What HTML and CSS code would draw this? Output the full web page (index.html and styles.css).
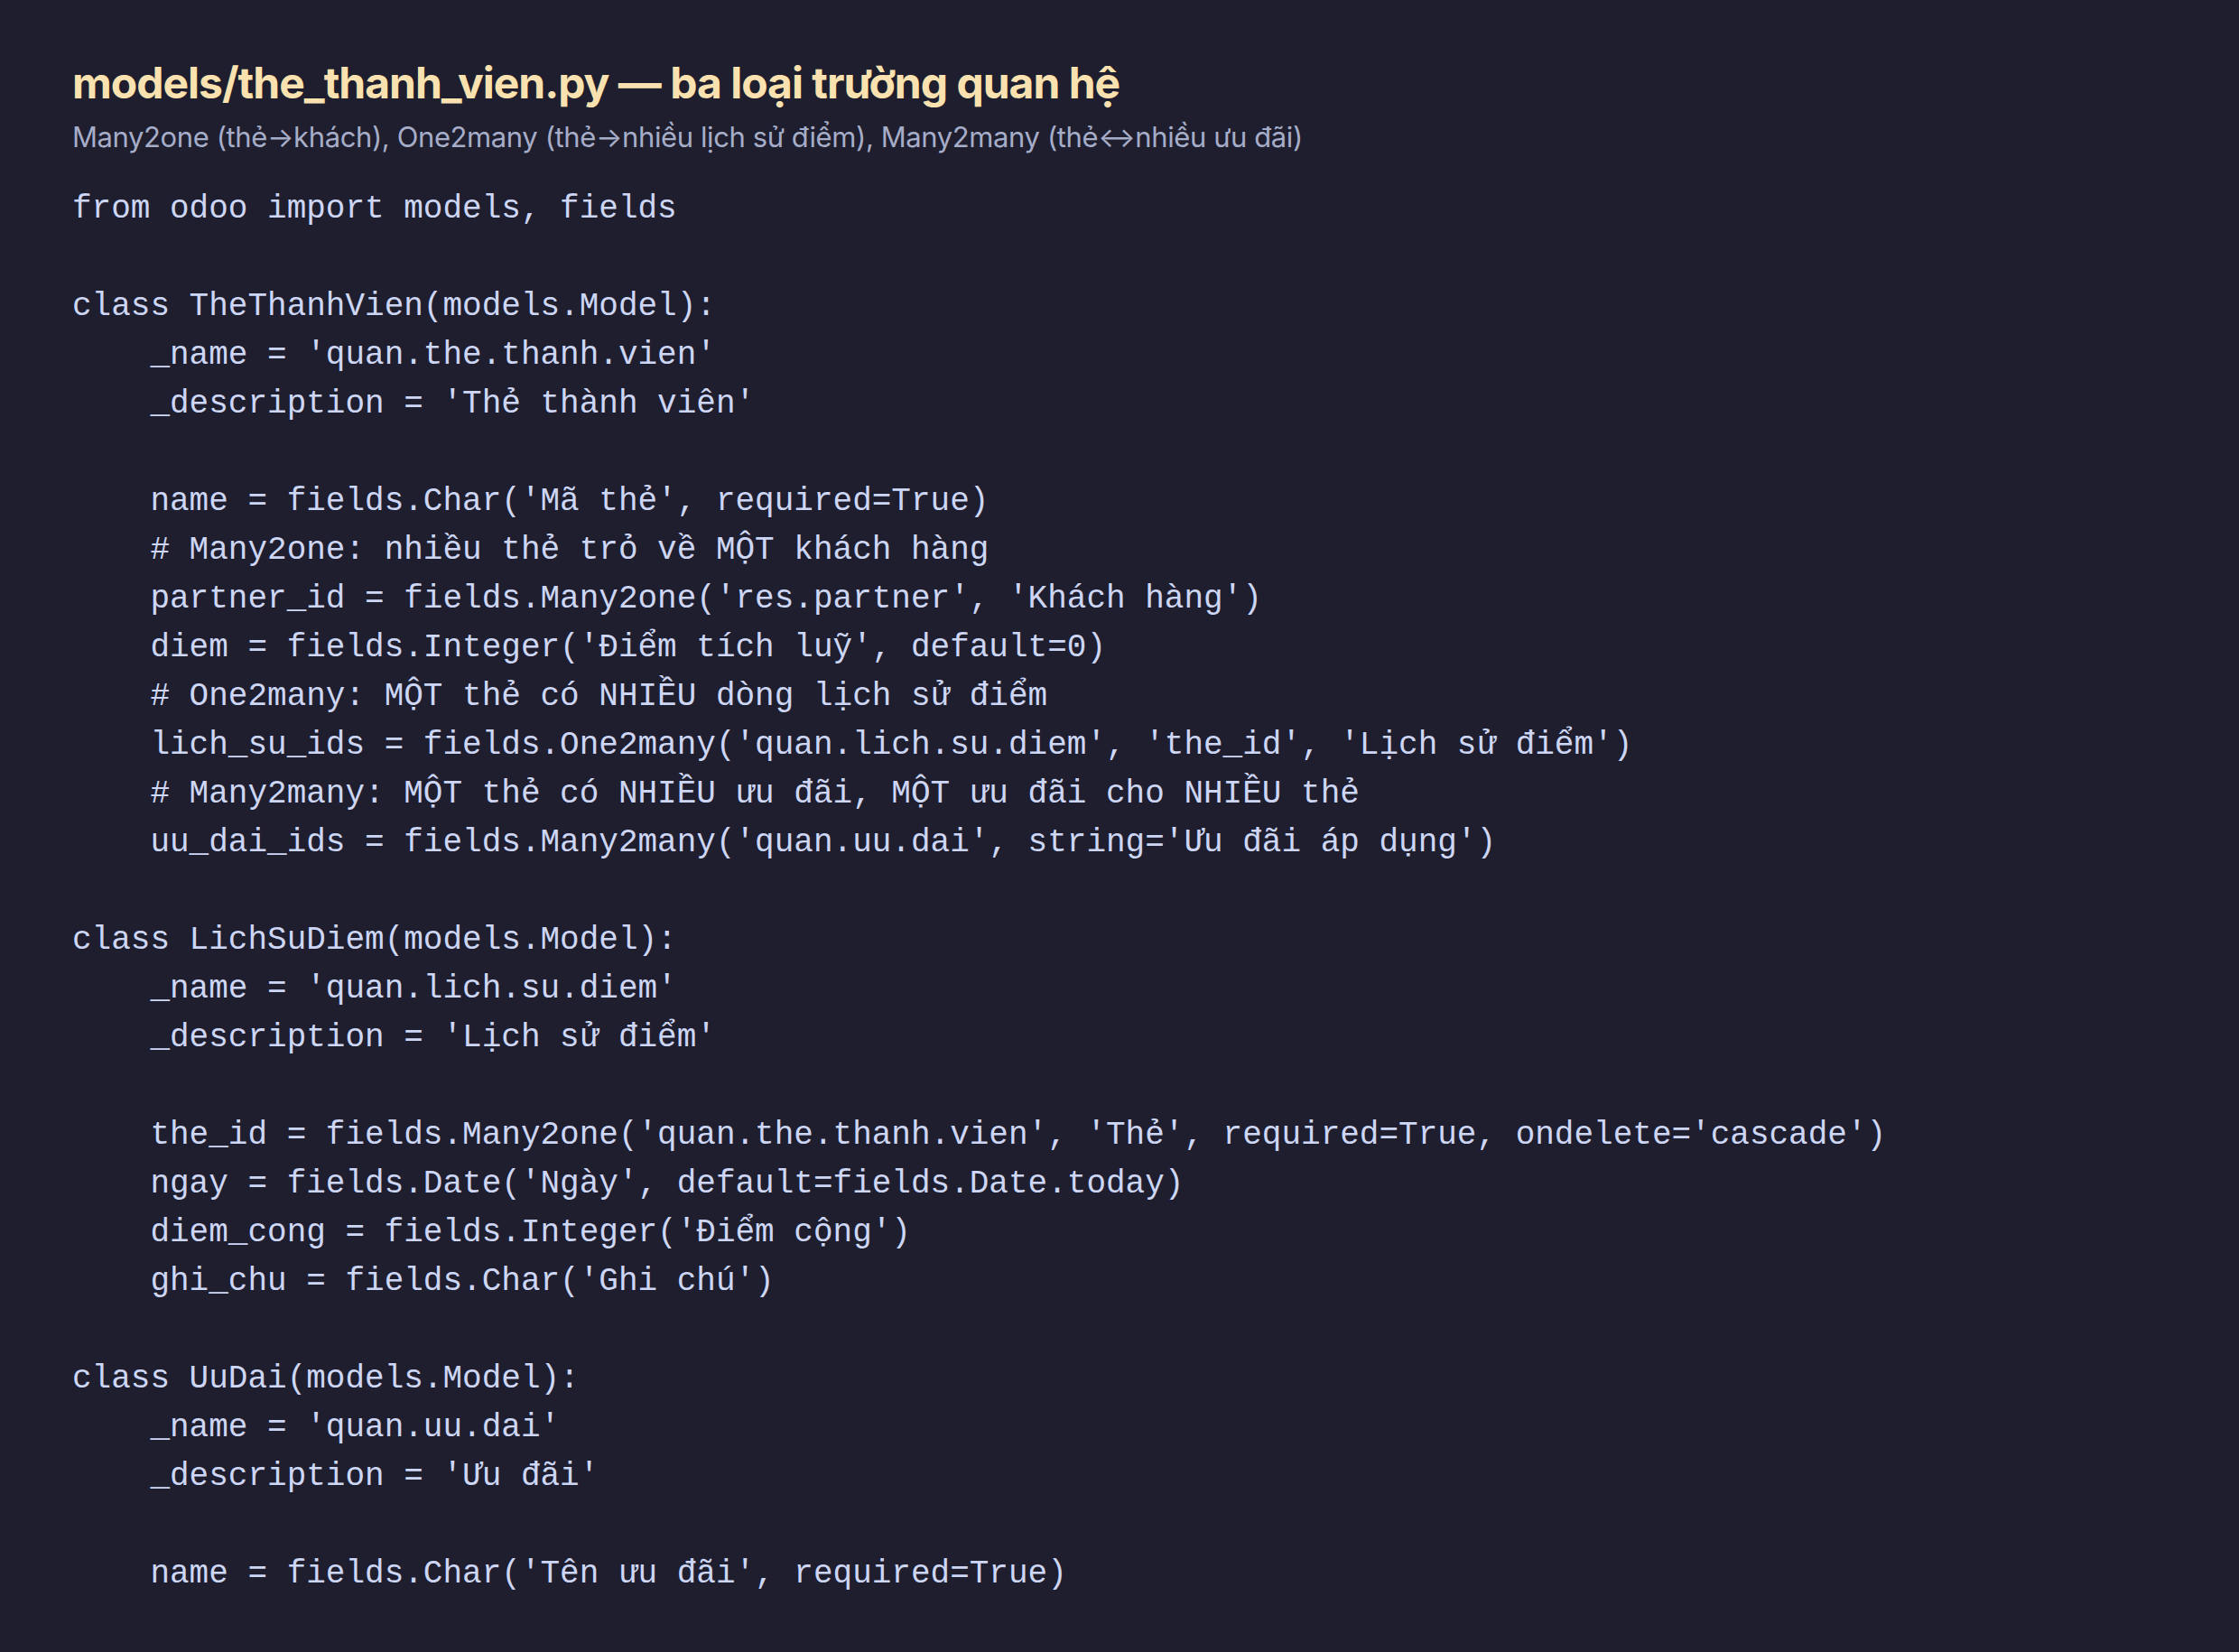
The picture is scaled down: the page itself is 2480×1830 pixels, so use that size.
FILE: index.html
```html
<!DOCTYPE html>
<html lang="vi">
<head>
<meta charset="utf-8">
<link rel="stylesheet" href="styles.css">
</head>
<body>
<main class="page">
  <header class="head">
    <h1 class="title">models/the_thanh_vien.py — ba loại trường quan hệ</h1>
    <p class="subtitle">Many2one (thẻ→khách), One2many (thẻ→nhiều lịch sử điểm), Many2many (thẻ↔nhiều ưu đãi)</p>
  </header>
<pre class="code">from odoo import models, fields

class TheThanhVien(models.Model):
    _name = 'quan.the.thanh.vien'
    _description = 'Thẻ thành viên'

    name = fields.Char('Mã thẻ', required=True)
    # Many2one: nhiều thẻ trỏ về MỘT khách hàng
    partner_id = fields.Many2one('res.partner', 'Khách hàng')
    diem = fields.Integer('Điểm tích luỹ', default=0)
    # One2many: MỘT thẻ có NHIỀU dòng lịch sử điểm
    lich_su_ids = fields.One2many('quan.lich.su.diem', 'the_id', 'Lịch sử điểm')
    # Many2many: MỘT thẻ có NHIỀU ưu đãi, MỘT ưu đãi cho NHIỀU thẻ
    uu_dai_ids = fields.Many2many('quan.uu.dai', string='Ưu đãi áp dụng')

class LichSuDiem(models.Model):
    _name = 'quan.lich.su.diem'
    _description = 'Lịch sử điểm'

    the_id = fields.Many2one('quan.the.thanh.vien', 'Thẻ', required=True, ondelete='cascade')
    ngay = fields.Date('Ngày', default=fields.Date.today)
    diem_cong = fields.Integer('Điểm cộng')
    ghi_chu = fields.Char('Ghi chú')

class UuDai(models.Model):
    _name = 'quan.uu.dai'
    _description = 'Ưu đãi'

    name = fields.Char('Tên ưu đãi', required=True)</pre>
</main>
</body>
</html>
```

FILE: styles.css
```css
html, body {
  margin: 0;
  padding: 0;
  background: #1e1e2e;
}
body {
  width: 2480px;
  height: 1830px;
  overflow: hidden;
}
.page {
  padding: 62px 80px 0 80px;
}
.head {
  display: flex;
  flex-direction: column;
  gap: 10px;
}
.title {
  margin: 0;
  font-family: Inter, "Noto Sans", sans-serif;
  font-weight: 700;
  font-size: 48px;
  line-height: 60px;
  letter-spacing: -1px;
  color: #f9e2af;
}
.subtitle {
  margin: 0;
  font-family: Inter, "Noto Sans", sans-serif;
  font-weight: 400;
  font-size: 31px;
  line-height: 40px;
  letter-spacing: -0.4px;
  color: #a6adc8;
}
.code {
  margin: 33px 0 0 0;
  font-family: "Liberation Mono", monospace;
  font-size: 36px;
  line-height: 54px;
  color: #cdd6f4;
  white-space: pre;
}
```
